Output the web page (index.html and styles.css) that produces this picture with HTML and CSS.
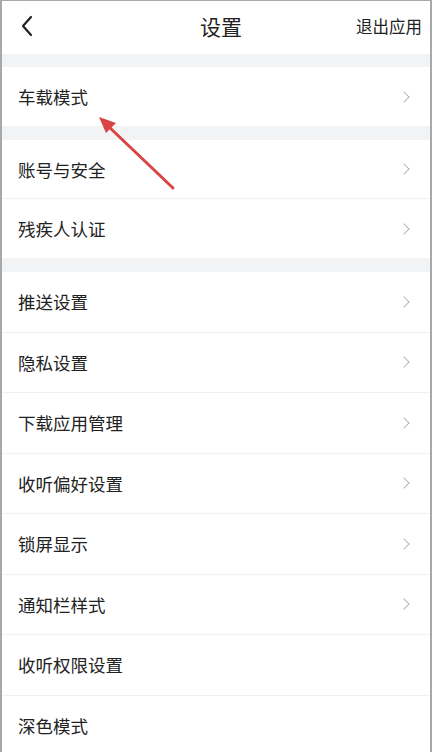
FILE: index.html
```html
<!DOCTYPE html>
<html lang="zh-CN">
<head>
  <meta charset="UTF-8">
  <meta name="viewport" content="width=device-width, initial-scale=1">
  <title>设置</title>
  <link rel="stylesheet" href="styles.css">
</head>
<body>
  <div class="screen">
    <header class="topbar">
      <div class="back">
        <svg width="14" height="22" viewBox="0 0 14 22"><path d="M11 2 L3 11 L11 20" fill="none" stroke="#222" stroke-width="2.2" stroke-linecap="round" stroke-linejoin="round"/></svg>
      </div>
      <h1 class="title">设置</h1>
      <div class="exit">退出应用</div>
    </header>

    <section class="group">
      <div class="row">车载模式<span class="chev"></span></div>
    </section>

    <section class="group">
      <div class="row">账号与安全<span class="chev"></span></div>
      <div class="row">残疾人认证<span class="chev"></span></div>
    </section>

    <section class="group group-main">
      <div class="row">推送设置<span class="chev"></span></div>
      <div class="row">隐私设置<span class="chev"></span></div>
      <div class="row">下载应用管理<span class="chev"></span></div>
      <div class="row">收听偏好设置<span class="chev"></span></div>
      <div class="row">锁屏显示<span class="chev"></span></div>
      <div class="row">通知栏样式<span class="chev"></span></div>
      <div class="row">收听权限设置</div>
      <div class="row">深色模式</div>
    </section>

    <!-- annotation arrow drawn over the list -->
    <svg class="pointer" width="432" height="752" viewBox="0 0 432 752">
      <line x1="173" y1="188" x2="108" y2="126" stroke="#d94444" stroke-width="3" stroke-linecap="round"/>
      <polygon points="99,117 116,123 106,133" fill="#d94444"/>
    </svg>
  </div>
</body>
</html>
```

FILE: styles.css
```css
* {
  margin: 0;
  padding: 0;
  box-sizing: border-box;
}

body {
  font-family: "Noto Sans CJK SC", "Noto Sans", sans-serif;
  background: #fff;
  color: #222;
}

.screen {
  position: relative;
  width: 432px;
  height: 752px;
  overflow: hidden;
  background: #f2f3f5;
  border-top: 1px solid #a8a8a8;
  border-left: 2px solid #a8a8a8;
  border-right: 2px solid #a8a8a8;
  display: flex;
  flex-direction: column;
  gap: 14px;
}

.topbar {
  height: 53px;
  margin-bottom: -1px;
  background: #fff;
  display: grid;
  grid-template-columns: 1fr auto 1fr;
  align-items: center;
  padding: 0 8px 3px 18px;
  flex-shrink: 0;
}

.back {
  display: flex;
  align-items: center;
}

.title {
  font-size: 21px;
  font-weight: normal;
  color: #222;
}

.exit {
  justify-self: end;
  font-size: 16.5px;
  color: #222;
}

.group {
  background: #fff;
  flex-shrink: 0;
}

.row {
  height: 59px;
  display: flex;
  align-items: center;
  justify-content: space-between;
  padding: 0 22px 0 16px;
  font-size: 17.5px;
  border-bottom: 1px solid #f1f1f1;
}

.group-main .row {
  height: 60.5px;
}

.group .row:last-child {
  border-bottom: none;
}

.chev {
  width: 8px;
  height: 8px;
  border-top: 1.5px solid #b8b8b8;
  border-right: 1.5px solid #b8b8b8;
  transform: rotate(45deg);
}

.pointer {
  position: absolute;
  top: -1px;
  left: -2px;
  pointer-events: none;
}
```
